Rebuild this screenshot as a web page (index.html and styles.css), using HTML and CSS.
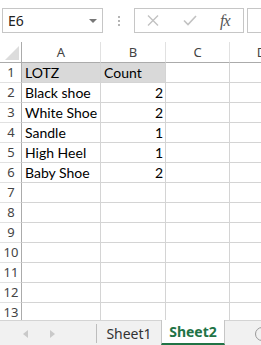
FILE: index.html
```html
<!DOCTYPE html>
<html lang="en">
<head>
    <meta charset="UTF-8">
    <title>Sheet2</title>
    <link rel="stylesheet" href="styles.css">
</head>
<body>
    <div class="app">
        <div class="fBar">
            <div class="nameBox">
                <span>E6</span>
                <i class="caret"></i>
            </div>
            <div class="dots"><b></b><b></b><b></b></div>
            <div class="fBtns">
                <svg class="fb" width="12" height="11" viewBox="0 0 12 11"><path d="M1 0.5 L11 10.5 M11 0.5 L1 10.5" stroke="#c2c2c2" stroke-width="1.4" fill="none"/></svg>
                <svg class="fb ok" width="14" height="11" viewBox="0 0 14 11"><path d="M1 5.5 L5 9.5 L13 1" stroke="#c2c2c2" stroke-width="1.6" fill="none"/></svg>
                <span class="fx">fx</span>
            </div>
            <div class="fInput"></div>
        </div>

        <div class="sheet">
            <div class="grid">
                <div class="corner">
                    <svg width="14" height="14" viewBox="0 0 14 14"><polygon points="14,0 14,14 0,14" fill="#dcdcdc"/></svg>
                </div>
                <div class="ch">A</div>
                <div class="ch">B</div>
                <div class="ch">C</div>
                <div class="ch">D</div>

                <div class="rh">1</div><div class="c fill">LOTZ</div><div class="c fill">Count</div><div class="c"></div><div class="c"></div>
                <div class="rh">2</div><div class="c">Black shoe</div><div class="c num">2</div><div class="c"></div><div class="c"></div>
                <div class="rh">3</div><div class="c">White Shoe</div><div class="c num">2</div><div class="c"></div><div class="c"></div>
                <div class="rh">4</div><div class="c">Sandle</div><div class="c num">1</div><div class="c"></div><div class="c"></div>
                <div class="rh">5</div><div class="c">High Heel</div><div class="c num">1</div><div class="c"></div><div class="c"></div>
                <div class="rh">6</div><div class="c">Baby Shoe</div><div class="c num">2</div><div class="c"></div><div class="c"></div>
                <div class="rh">7</div><div class="c"></div><div class="c"></div><div class="c"></div><div class="c"></div>
                <div class="rh">8</div><div class="c"></div><div class="c"></div><div class="c"></div><div class="c"></div>
                <div class="rh">9</div><div class="c"></div><div class="c"></div><div class="c"></div><div class="c"></div>
                <div class="rh">10</div><div class="c"></div><div class="c"></div><div class="c"></div><div class="c"></div>
                <div class="rh">11</div><div class="c"></div><div class="c"></div><div class="c"></div><div class="c"></div>
                <div class="rh">12</div><div class="c"></div><div class="c"></div><div class="c"></div><div class="c"></div>
                <div class="rh">13</div><div class="c"></div><div class="c"></div><div class="c"></div><div class="c"></div>
            </div>
        </div>

        <div class="tabs">
            <div class="nav">
                <span class="arr left"></span>
                <span class="arr right"></span>
            </div>
            <span class="tab">Sheet1</span>
            <span class="tab active">Sheet2</span>
            <span class="addSheet"></span>
        </div>
    </div>
</body>
</html>
```

FILE: styles.css
```css
* {
    margin: 0;
    padding: 0;
    box-sizing: border-box;
}

body {
    width: 261px;
    height: 345px;
    overflow: hidden;
    background: #fff;
    font-family: "Noto Sans", "Open Sans", sans-serif;
}

.app {
    display: flex;
    flex-direction: column;
    height: 345px;
}

/* formula bar */
.fBar {
    height: 42px;
    display: flex;
    align-items: flex-start;
    padding-top: 8px;
    padding-left: 2px;
    flex-shrink: 0;
}
.fBar .nameBox {
    width: 101px;
    height: 25px;
    border: 1px solid #c6c6c6;
    display: flex;
    align-items: center;
    justify-content: space-between;
    padding: 0 5px 0 5px;
    font-size: 14px;
    color: #222;
}
.fBar .caret {
    width: 0;
    height: 0;
    border-left: 4px solid transparent;
    border-right: 4px solid transparent;
    border-top: 4px solid #777;
    margin-top: 1px;
}
.fBar .dots {
    width: 31px;
    height: 25px;
    display: flex;
    flex-direction: column;
    align-items: center;
    justify-content: center;
    gap: 2px;
}
.fBar .dots b {
    width: 2px;
    height: 2px;
    background: #b5b5b5;
}
.fBar .fBtns {
    width: 110px;
    height: 25px;
    border: 1px solid #c6c6c6;
    display: flex;
    align-items: center;
    padding: 0 0 0 12px;
}
.fBar .fb.ok {
    margin-left: 24px;
}
.fBar .fx {
    margin-left: 23px;
    color: #555;
    font-family: "Liberation Serif", serif;
    font-style: italic;
    font-size: 16px;
    letter-spacing: -1px;
    line-height: 1;
}
.fBar .fInput {
    flex: 1;
    height: 25px;
    margin-left: 3px;
    border: 1px solid #c6c6c6;
    border-right: none;
}

/* cells */
.sheet {
    height: 278px;
    overflow: hidden;
    flex-shrink: 0;
}
.grid {
    display: grid;
    grid-template-columns: 22px 79px 65px 64px 64px;
    grid-template-rows: 21px;
    grid-auto-rows: 20px;
}
.grid .corner {
    border-right: 1px solid #ababab;
    border-bottom: 1px solid #ababab;
    display: flex;
    align-items: flex-end;
    justify-content: flex-end;
    padding: 0 2px 2px 0;
}
.grid .ch {
    border-right: 1px solid #e1e1e1;
    border-bottom: 1px solid #ababab;
    font-size: 13px;
    color: #444;
    text-align: center;
    line-height: 20px;
}
.grid .rh {
    border-right: 1px solid #ababab;
    border-bottom: 1px solid #e1e1e1;
    font-size: 13px;
    color: #444;
    text-align: center;
    line-height: 19px;
    padding-left: 1px;
}
.grid .c {
    border-right: 1px solid #d4d4d4;
    border-bottom: 1px solid #d4d4d4;
    font-family: Lato, "Liberation Sans", sans-serif;
    font-size: 14px;
    color: #000;
    line-height: 19px;
    padding: 0 2px 0 3px;
    white-space: nowrap;
}
.grid .c.fill {
    background: #d9d9d9;
}
.grid .c.num {
    text-align: right;
}

/* sheet tabs */
.tabs {
    flex: 1;
    background: #f1f1f1;
    border-top: 1px solid #d4d4d4;
    display: flex;
    align-items: stretch;
    position: relative;
}
.tabs .nav {
    width: 97px;
    display: flex;
    align-items: center;
    padding-left: 23px;
    gap: 22px;
    border-right: 1px solid #bdbdbd;
    margin: 3px 0 2px;
}
.tabs .arr {
    width: 0;
    height: 0;
    border-top: 4px solid transparent;
    border-bottom: 4px solid transparent;
}
.tabs .arr.left {
    border-right: 5px solid #c9c9c9;
}
.tabs .arr.right {
    border-left: 5px solid #c9c9c9;
}
.tabs .tab {
    width: 64px;
    display: flex;
    align-items: center;
    justify-content: center;
    font-size: 14px;
    color: #333;
}
.tabs .tab.active {
    background: #fff;
    color: #217346;
    font-weight: bold;
    border-left: 1px solid #c6c6c6;
    border-right: 1px solid #c6c6c6;
    border-bottom: 2px solid #217346;
    margin-top: -1px;
}
.tabs .addSheet {
    position: absolute;
    left: 255px;
    top: 6px;
    width: 14px;
    height: 14px;
    border: 1px solid #999;
    border-radius: 50%;
}
```
